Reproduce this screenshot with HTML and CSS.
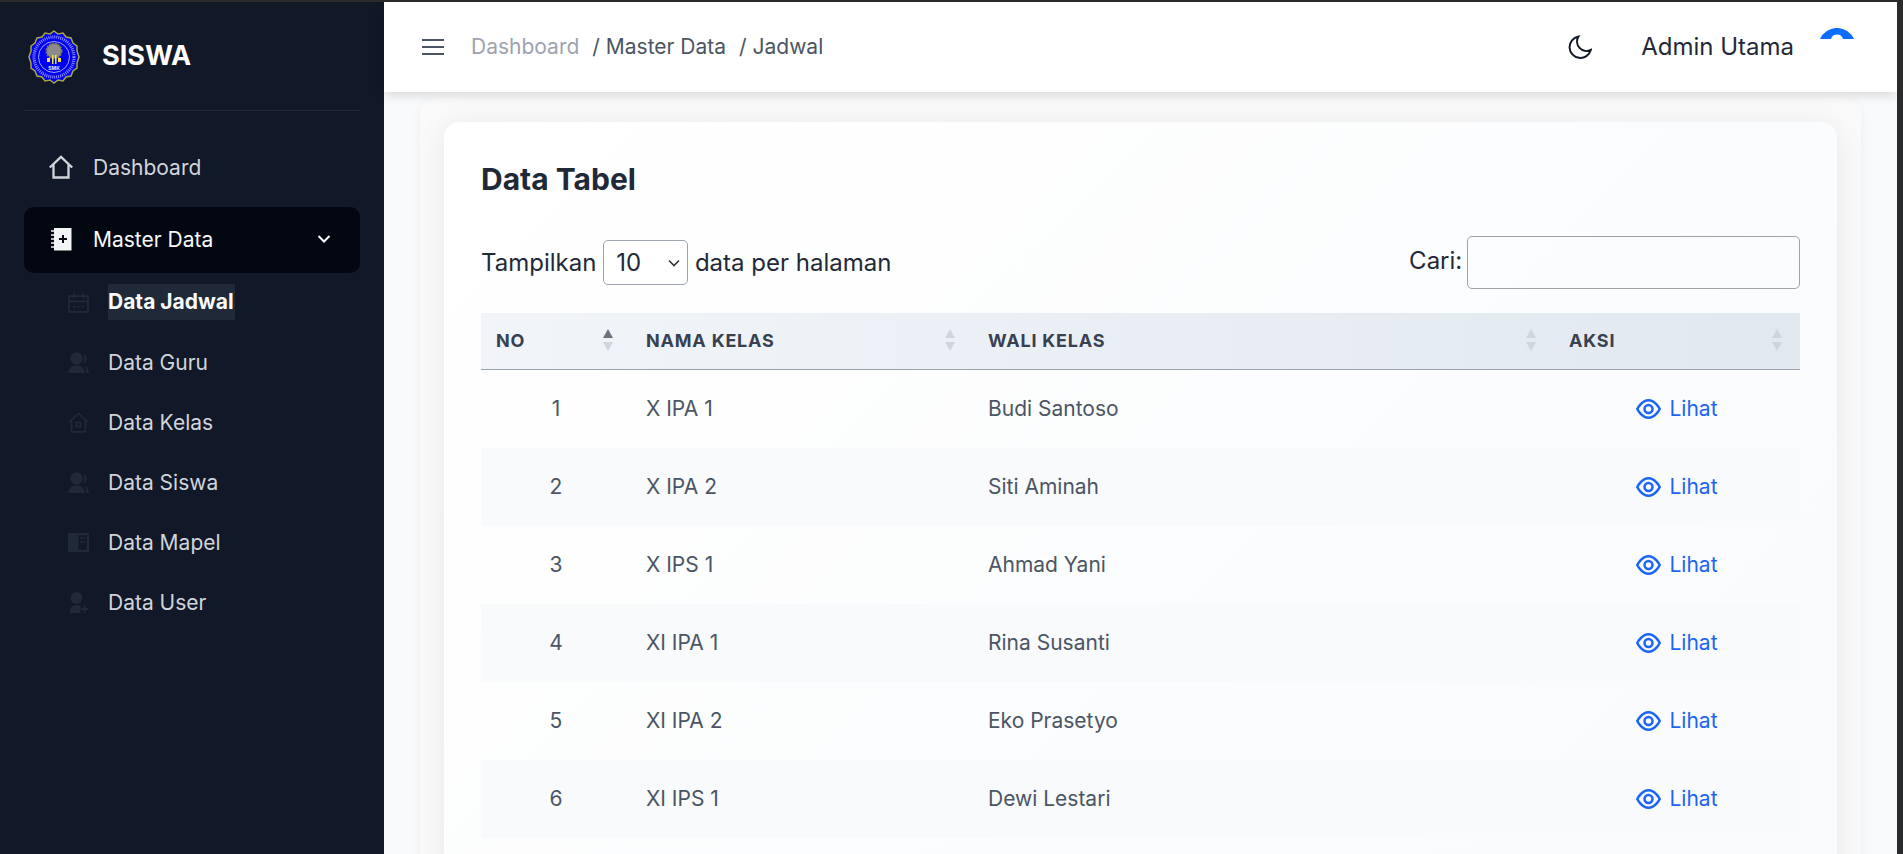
FILE: index.html
```html
<!DOCTYPE html>
<html>
<head>
    <title>Jadwal</title>
    <link rel="stylesheet" href="styles.css">
</head>
<body>
    <svg class="icon-defs" width="0" height="0">
        <symbol id="i-users" viewBox="0 0 21 21"><g fill="currentColor"><circle cx="8.500" cy="6.500" r="6.300"/><path d="M.5 21c0-5 3.500-7.800 8-7.800s8 2.800 8.500 7.800z"/><path d="M15 1a6 6 0 0 1 0 11 7 7 0 0 0 1.300-5.500A7 7 0 0 0 15 1zM17 13.500c2 1 3.500 4 4 7.500h-2.500c-.3-3-.8-5.500-1.500-7.500z"/></g></symbol>
        <symbol id="i-eye" viewBox="0 0 25 20"><path d="M1.300 10S5.500 1.300 12.500 1.300 23.700 10 23.700 10s-4.200 8.700-11.200 8.700S1.300 10 1.300 10z" fill="none" stroke="currentColor" stroke-width="2.500"/><circle cx="12.500" cy="10" r="4" fill="none" stroke="currentColor" stroke-width="2.500"/></symbol>
    </svg>

    <div class="frame">
        <aside class="sidebar">
            <div class="brand">
                <svg class="logo" viewBox="0 0 54 54">
                    <path d="M27 1l4 3 5-1 3 4 5 1 2 5 4 3v5l2 6-2 6v5l-4 3-2 5-5 1-3 4-5-1-4 3-4-3-5 1-3-4-5-1-2-5-4-3v-5l-2-6 2-6v-5l4-3 2-5 5-1 3-4 5 1z" fill="#0000f0" stroke="#a8a548" stroke-width="1.500"/>
                    <circle cx="27" cy="27" r="20" fill="none" stroke="#8f8fff" stroke-width="3" stroke-dasharray="1 1"/>
                    <circle cx="27" cy="27" r="15.500" fill="#0000f0" stroke="#c9c9ff" stroke-width=".8"/>
                    <circle cx="27" cy="21" r="7.500" fill="#8b8b8b" stroke="#77775f" stroke-width="2" stroke-dasharray="2 1"/>
                    <path d="M20 32v-4h3v4zM25 34v-9h1.500v9zM28 34v-9h1.500v9zM31 32v-4h3v4z" fill="#f6e63a"/>
                    <text class="logo-text" x="27" y="39.500">SMK</text>
                </svg>
                <span class="brand-name">SISWA</span>
            </div>

            <nav class="menu">
                <a class="menu-item">
                    <svg class="menu-icon" viewBox="0 0 24 24" fill="none" stroke="currentColor" stroke-width="2.300"><path d="M0.800 12.500L12 1.800l11.200 10.700M4.500 9.500V22.500h15V9.500"/></svg>
                    Dashboard
                </a>
                <a class="menu-item active">
                    <svg class="menu-icon" viewBox="0 0 24 24"><path d="M5 1h17.500v22.500H5z" fill="#f3f4f6"/><path d="M2 4h4M2 8h4M2 12h4M2 16h4M2 20h4" stroke="#f3f4f6" stroke-width="1.600"/><path d="M14 8v8M10 12h8" stroke="#030712" stroke-width="2"/></svg>
                    <span class="menu-label">Master Data</span>
                    <svg class="chevron" viewBox="0 0 14 10" fill="none" stroke="currentColor" stroke-width="2"><path d="M1.500 2l5.500 5.500L12.500 2"/></svg>
                </a>
                <div class="submenu">
                    <a class="sub-item current">
                        <svg class="sub-icon" viewBox="0 0 20 20"><path d="M1 4h18v15H1zM1 9h18M5.500 1v5M14.500 1v5" fill="none" stroke="currentColor" stroke-width="1.600"/><path d="M5 13h2v2H5zM9 13h2v2H9zM13 13h2v2h-2z" fill="currentColor"/></svg>
                        <span>Data Jadwal</span>
                    </a>
                    <a class="sub-item">
                        <svg class="sub-icon"><use href="#i-users"/></svg>
                        <span>Data Guru</span>
                    </a>
                    <a class="sub-item">
                        <svg class="sub-icon" viewBox="0 0 20 20" fill="none" stroke="currentColor" stroke-width="1.600"><path d="M1 9.500L10 1.500l9 8M3.500 8v11h13V8"/><path d="M8 10h4v4H8z"/></svg>
                        <span>Data Kelas</span>
                    </a>
                    <a class="sub-item">
                        <svg class="sub-icon"><use href="#i-users"/></svg>
                        <span>Data Siswa</span>
                    </a>
                    <a class="sub-item">
                        <svg class="sub-icon" viewBox="0 0 20 18"><path d="M0 0h20v18H0zM10 2v14h8V2z" fill="currentColor" fill-rule="evenodd"/><path d="M11.500 4h5v1.500h-5zM11.500 7.500h5V9h-5z" fill="currentColor"/></svg>
                        <span>Data Mapel</span>
                    </a>
                    <a class="sub-item">
                        <svg class="sub-icon" viewBox="0 0 20 21"><circle cx="8" cy="6" r="6" fill="currentColor"/><path d="M1 21c0-5 3-8 8-8 1 0 2 .2 3 .5V21z" fill="currentColor"/><path d="M16 13v8M12.500 17H20" stroke="currentColor" stroke-width="1.800"/></svg>
                        <span>Data User</span>
                    </a>
                </div>
            </nav>
        </aside>

        <div class="main">
            <header class="topbar">
                <svg class="burger" viewBox="0 0 22 18" fill="none" stroke="currentColor" stroke-width="2"><path d="M0 2h22M0 9h22M0 16h22"/></svg>
                <div class="crumbs">
                    <span class="crumb-first">Dashboard</span>
                    <span>/ Master Data</span>
                    <span>/ Jadwal</span>
                </div>
                <svg class="moon" viewBox="0 0 24 24" fill="none" stroke="currentColor" stroke-width="2"><path d="M10.500 1.500A10.800 10.800 0 1 0 22.800 15 9.500 9.500 0 0 1 10.500 1.500z"/></svg>
                <span class="user-name">Admin Utama</span>
                <svg class="spinner" viewBox="0 0 34 11"><path d="M0 11A18.600 18.600 0 0 1 34 11H23A6.300 6.300 0 0 0 11 11z"/></svg>
            </header>

            <div class="content">
                <div class="outer-card">
                    <div class="card">
                        <h2>Data Tabel</h2>
                        <div class="toolbar">
                            <label class="per-page">Tampilkan
                                <select><option>10</option></select>
                                data per halaman</label>
                            <label class="search">Cari: <input type="text"></label>
                        </div>
                        <table>
                            <thead>
                                <tr>
                                    <th class="col-no">NO<span class="sort"><i class="up on"></i><i class="down"></i></span></th>
                                    <th class="col-kelas">NAMA KELAS<span class="sort"><i class="up"></i><i class="down"></i></span></th>
                                    <th class="col-wali">WALI KELAS<span class="sort"><i class="up"></i><i class="down"></i></span></th>
                                    <th class="col-aksi">AKSI<span class="sort"><i class="up"></i><i class="down"></i></span></th>
                                </tr>
                            </thead>
                            <tbody>
                                <tr><td class="num">1</td><td>X IPA 1</td><td>Budi Santoso</td><td><a class="view"><svg class="eye"><use href="#i-eye"/></svg>Lihat</a></td></tr>
                                <tr><td class="num">2</td><td>X IPA 2</td><td>Siti Aminah</td><td><a class="view"><svg class="eye"><use href="#i-eye"/></svg>Lihat</a></td></tr>
                                <tr><td class="num">3</td><td>X IPS 1</td><td>Ahmad Yani</td><td><a class="view"><svg class="eye"><use href="#i-eye"/></svg>Lihat</a></td></tr>
                                <tr><td class="num">4</td><td>XI IPA 1</td><td>Rina Susanti</td><td><a class="view"><svg class="eye"><use href="#i-eye"/></svg>Lihat</a></td></tr>
                                <tr><td class="num">5</td><td>XI IPA 2</td><td>Eko Prasetyo</td><td><a class="view"><svg class="eye"><use href="#i-eye"/></svg>Lihat</a></td></tr>
                                <tr><td class="num">6</td><td>XI IPS 1</td><td>Dewi Lestari</td><td><a class="view"><svg class="eye"><use href="#i-eye"/></svg>Lihat</a></td></tr>
                            </tbody>
                        </table>
                    </div>
                </div>
            </div>
        </div>
    </div>
</body>
</html>
```
FILE: styles.css
```css
html, body {
    height: 100%;
}

body {
    margin: 0;
    overflow: hidden;
    font-family: Inter, "Noto Sans", sans-serif;
    color: #1f2937;
    background: #2b2b2b;
}

.icon-defs {
    display: block;
}

.frame {
    display: flex;
    height: 852px;
    margin: 2px 6px 0 0;
    overflow: hidden;
}

/* sidebar */
.sidebar {
    width: 384px;
    flex-shrink: 0;
    background: #111827;
    padding: 0 24px;
    box-sizing: border-box;
}

.brand {
    display: flex;
    align-items: center;
    height: 108px;
    padding: 0 0 0 3px;
    border-bottom: 1px solid #1f2937;
}

.logo {
    width: 54px;
    height: 54px;
    margin-top: 1px;
}

.logo-text {
    font-size: 5px;
    font-weight: 700;
    fill: #e8e8ff;
    text-anchor: middle;
}

.brand-name {
    margin-left: 21px;
    padding-bottom: 2px;
    font-size: 27px;
    font-weight: 700;
    color: #fff;
}

.menu {
    margin-top: 24px;
}

.menu-item {
    display: flex;
    align-items: center;
    height: 66px;
    padding: 0 25px 2px;
    box-sizing: border-box;
    border-radius: 10px;
    color: #d1d5db;
    font-size: 21px;
}

.menu-item.active {
    margin-top: 6px;
    background: #030712;
    color: #f9fafb;
}

.menu-icon {
    width: 24px;
    height: 24px;
    margin-right: 20px;
}

.menu-label {
    flex: 1;
}

.chevron {
    width: 14px;
    height: 10px;
    margin-right: 4px;
}

.submenu {
    padding: 11px 0 0 44px;
}

.sub-item {
    display: flex;
    align-items: center;
    height: 60px;
    color: #d1d5db;
    font-size: 21px;
}

.sub-item:first-child {
    height: 36px;
    margin-bottom: 12px;
}

.sub-icon {
    width: 21px;
    height: 21px;
    margin-right: 19px;
    color: #1f2937;
}

.sub-item.current span {
    padding: 5px 1px 6px 0;
    background: #1f2937;
    color: #f9fafb;
    font-weight: 700;
}

/* header */
.main {
    flex: 1;
    min-width: 0;
    display: flex;
    flex-direction: column;
    background: #f9fafc;
}

.topbar {
    position: relative;
    z-index: 2;
    display: flex;
    align-items: center;
    flex-shrink: 0;
    height: 90px;
    padding: 0 103px 0 38px;
    background: #fff;
    box-shadow: 0 4px 10px rgba(0, 0, 0, 0.12);
}

.burger {
    width: 22px;
    height: 18px;
    color: #4b5563;
    margin-right: 27px;
}

.crumbs {
    display: flex;
    flex: 1;
    gap: 13px;
    padding-bottom: 2px;
    font-size: 21px;
    color: #4b5563;
}

.crumb-first {
    color: #9ca3af;
}

.moon {
    width: 24px;
    height: 24px;
    color: #111827;
    margin-right: 49px;
}

.user-name {
    padding-bottom: 2px;
    font-size: 24px;
    color: #1f2937;
}

.spinner {
    position: absolute;
    right: 43px;
    top: 26px;
    width: 34px;
    height: 11px;
    fill: #0d6efd;
}

/* content */
.content {
    flex: 1;
    padding: 6px 36px 0;
    overflow: hidden;
}

.outer-card {
    padding: 24px;
    border-radius: 16px;
    background: #fafafa;
    box-shadow: 0 4px 12px rgba(0, 0, 0, 0.05);
}

.card {
    height: 900px;
    padding: 35px 37px;
    border-radius: 16px;
    background: linear-gradient(135deg, #fff, #f8fafc);
    box-shadow: 0 4px 30px rgba(0, 0, 0, 0.08);
    box-sizing: border-box;
}

.card h2 {
    margin: 0 0 35px;
    font-size: 30px;
    line-height: 44px;
    font-weight: 700;
    color: #1f2937;
}

.toolbar {
    display: flex;
    align-items: center;
    justify-content: space-between;
    margin-bottom: 24px;
    font-size: 24px;
    color: #1f2937;
}

.per-page select {
    width: 85px;
    height: 45px;
    padding: 0 24px 0 12px;
    appearance: none;
    border: 1px solid #9ca3af;
    border-radius: 5px;
    background: #fff url("data:image/svg+xml,%3Csvg xmlns='http://www.w3.org/2000/svg' viewBox='0 0 12 8' fill='none' stroke='%23333' stroke-width='1.600'%3E%3Cpath d='M1 1.500l5 5 5-5'/%3E%3C/svg%3E") no-repeat right 7px center / 12px 8px;
    color: #1f2937;
    font: inherit;
}

.search input {
    width: 333px;
    height: 53px;
    margin-left: -2px;
    border: 1px solid #a3a3a3;
    border-radius: 5px;
    background: transparent;
    box-sizing: border-box;
    vertical-align: middle;
}

table {
    width: 100%;
    border-collapse: collapse;
    table-layout: fixed;
}

thead tr {
    height: 56px;
    background: linear-gradient(90deg, #f1f5f9, #e2e8f0);
    border-bottom: 1px solid #9ca3af;
}

th {
    position: relative;
    padding: 0 15px;
    text-align: left;
    font-size: 18px;
    font-weight: 700;
    letter-spacing: 0.8px;
    color: #374151;
}

.col-no { width: 120px; }
.col-kelas { width: 312px; }
.col-wali { width: 551px; }

.sort {
    position: absolute;
    right: 18px;
    top: 16px;
    display: flex;
    flex-direction: column;
    gap: 4px;
}

.sort i {
    width: 0;
    height: 0;
    border-left: 5px solid transparent;
    border-right: 5px solid transparent;
}

.sort .up {
    border-bottom: 9px solid #d1d5db;
}

.sort .up.on {
    border-bottom-color: #6b7280;
}

.sort .down {
    border-top: 9px solid #d1d5db;
}

td {
    height: 78px;
    padding: 0 15px;
    font-size: 21px;
    color: #4b5563;
}

tbody tr:nth-child(even) {
    background: #f9fafc;
}

.num {
    text-align: center;
}

.view {
    display: flex;
    align-items: center;
    justify-content: center;
    color: #1d64f7;
}

.eye {
    width: 25px;
    height: 20px;
    margin-right: 8px;
}
```
